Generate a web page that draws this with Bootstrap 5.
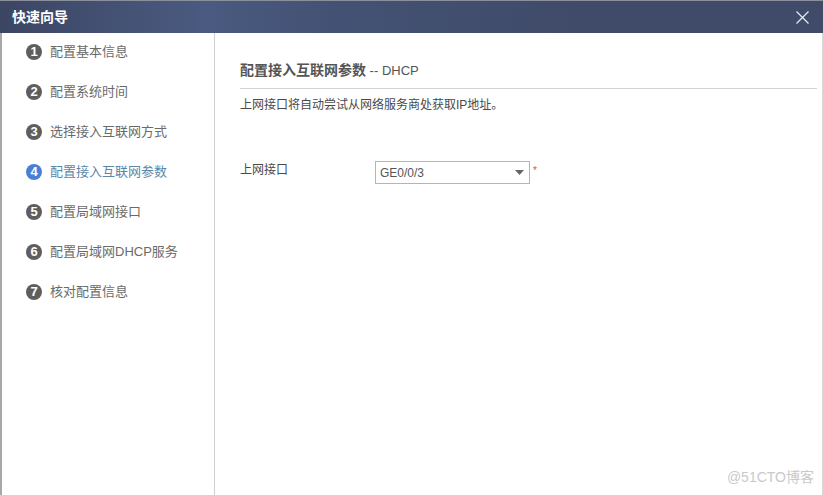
<!DOCTYPE html>
<html lang="zh-CN">
<head>
    <meta charset="UTF-8">
    <title>快速向导</title>
    <link href="https://cdn.jsdelivr.net/npm/bootstrap@5.3.0/dist/css/bootstrap.min.css" rel="stylesheet">
    <style>
        html, body { height: 100%; overflow: hidden; }
        body {
            background: #fff;
            color: #444;
            font-family: "Liberation Sans", "Noto Sans CJK SC", sans-serif;
            font-size: 12px;
        }
        .wiz-shell { height: 495px; border-left: 2px solid #a8a8a8; border-right: 1px solid #d8d8d8; }
        .wiz-title {
            height: 33px;
            margin-left: -2px;
            margin-right: -1px;
            padding: 0 14px 0 12px;
            background: linear-gradient(90deg, #3c4663 0%, #4a5a80 25%, #435274 40%, #404b69 70%, #404b69 100%);
            border-top: 1px solid #8b8f9c;
            color: #fff;
            font-size: 14px;
            font-weight: 700;
        }
        .wiz-side { width: 213px; border-right: 1px solid #cfcfcf; flex: none; }
        .wiz-step { height: 40px; padding-left: 24px; gap: 8px; font-size: 13px; color: #6a6a6a; }
        .wiz-step:first-child { margin-top: -1px; }
        .wiz-num {
            width: 16px;
            height: 16px;
            border-radius: 50%;
            background: #5e5e5e;
            color: #fff;
            font-size: 13px;
            font-weight: 700;
            line-height: 16px;
            text-align: center;
        }
        .wiz-step.is-current { color: #5b87a8; }
        .wiz-step.is-current .wiz-num { background: #4a80d4; }
        .wiz-main { padding: 0 5px 0 25px; }
        .wiz-head {
            height: 56px;
            padding-top: 25px;
            line-height: 24px;
            border-bottom: 1px solid #d2d2d2;
            font-size: 13px;
            color: #555;
        }
        .wiz-head b { font-size: 14px; font-weight: 700; }
        .wiz-desc { margin: 7px 0 0; line-height: 18px; color: #4a4a4a; }
        .wiz-field { margin-top: 47px; }
        .wiz-label { width: 135px; line-height: 16px; margin-top: -6px; color: #4a4a4a; }
        .wiz-select.form-select {
            width: 155px;
            height: 23px;
            padding: 0 20px 0 4px;
            border: 1px solid #b5b5b5;
            border-radius: 0;
            color: #555;
            font-size: 12px;
            background-position: right 5px center;
            background-size: 9px 5px;
            background-image: url("data:image/svg+xml,%3csvg xmlns='http://www.w3.org/2000/svg' viewBox='0 0 9 5'%3e%3cpath fill='%23666' d='M0 0h9L4.5 5z'/%3e%3c/svg%3e");
        }
        .wiz-req { color: #d9534f; margin-left: 3px; font-size: 10px; line-height: 14px; align-self: flex-start; margin-top: 3px; }
        .wiz-mark {
            position: absolute;
            right: 8px;
            bottom: 7px;
            color: #c9c9c9;
            font-size: 14px;
        }
    </style>
</head>
<body>
    <div class="wiz-shell d-flex flex-column position-relative">
        <div class="wiz-title d-flex align-items-center justify-content-between flex-none">
            <span>快速向导</span>
            <svg width="13" height="13" viewBox="0 0 13 13" fill="none" stroke="#e4e8f2" stroke-width="1.3">
                <path d="M.5.5l12 12M12.5.5l-12 12"/>
            </svg>
        </div>
        <div class="d-flex flex-grow-1">
            <ul class="wiz-side list-unstyled mb-0">
                <li class="wiz-step d-flex align-items-center"><span class="wiz-num">1</span>配置基本信息</li>
                <li class="wiz-step d-flex align-items-center"><span class="wiz-num">2</span>配置系统时间</li>
                <li class="wiz-step d-flex align-items-center"><span class="wiz-num">3</span>选择接入互联网方式</li>
                <li class="wiz-step is-current d-flex align-items-center"><span class="wiz-num">4</span>配置接入互联网参数</li>
                <li class="wiz-step d-flex align-items-center"><span class="wiz-num">5</span>配置局域网接口</li>
                <li class="wiz-step d-flex align-items-center"><span class="wiz-num">6</span>配置局域网DHCP服务</li>
                <li class="wiz-step d-flex align-items-center"><span class="wiz-num">7</span>核对配置信息</li>
            </ul>
            <div class="wiz-main flex-grow-1">
                <div class="wiz-head"><b>配置接入互联网参数</b> -- DHCP</div>
                <p class="wiz-desc">上网接口将自动尝试从网络服务商处获取IP地址。</p>
                <div class="wiz-field d-flex align-items-center">
                    <span class="wiz-label">上网接口</span>
                    <select class="wiz-select form-select">
                        <option>GE0/0/3</option>
                    </select>
                    <span class="wiz-req">*</span>
                </div>
            </div>
        </div>
        <span class="wiz-mark">@51CTO博客</span>
    </div>
    <script src="https://cdn.jsdelivr.net/npm/bootstrap@5.3.0/dist/js/bootstrap.bundle.min.js"></script>
</body>
</html>
